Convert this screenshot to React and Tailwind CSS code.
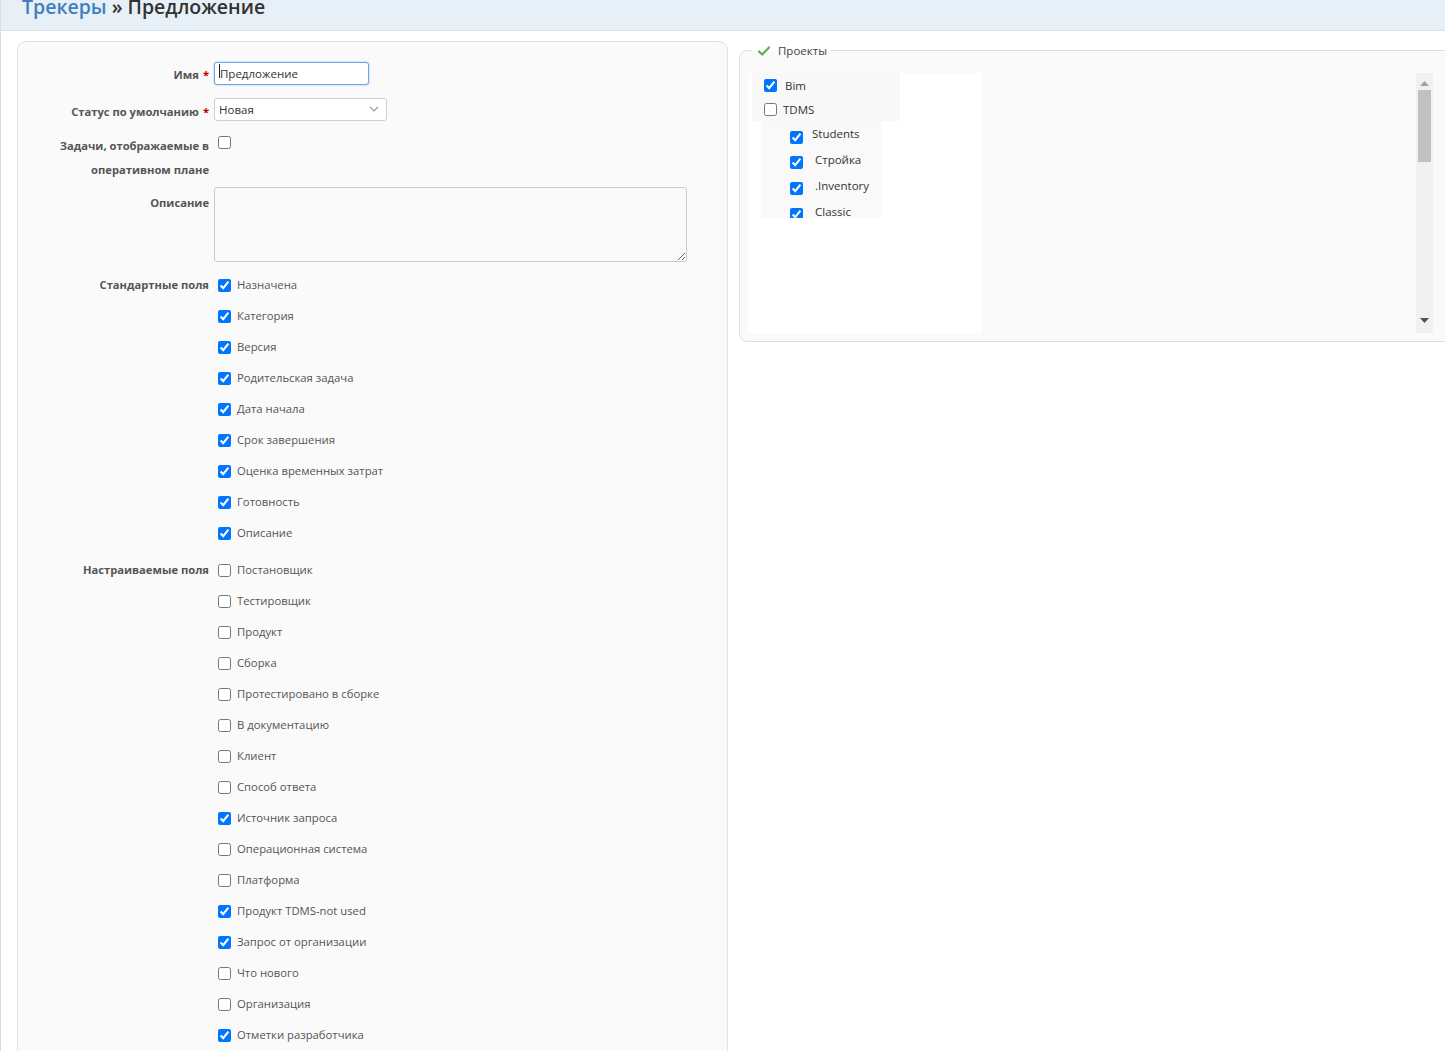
import { useState } from 'react';

const standardFields = [
  { name: 'Назначена', checked: true },
  { name: 'Категория', checked: true },
  { name: 'Версия', checked: true },
  { name: 'Родительская задача', checked: true },
  { name: 'Дата начала', checked: true },
  { name: 'Срок завершения', checked: true },
  { name: 'Оценка временных затрат', checked: true },
  { name: 'Готовность', checked: true },
  { name: 'Описание', checked: true },
];

const customFields = [
  { name: 'Постановщик', checked: false },
  { name: 'Тестировщик', checked: false },
  { name: 'Продукт', checked: false },
  { name: 'Сборка', checked: false },
  { name: 'Протестировано в сборке', checked: false },
  { name: 'В документацию', checked: false },
  { name: 'Клиент', checked: false },
  { name: 'Способ ответа', checked: false },
  { name: 'Источник запроса', checked: true },
  { name: 'Операционная система', checked: false },
  { name: 'Платформа', checked: false },
  { name: 'Продукт TDMS-not used', checked: true },
  { name: 'Запрос от организации', checked: true },
  { name: 'Что нового', checked: false },
  { name: 'Организация', checked: false },
  { name: 'Отметки разработчика', checked: true },
  { name: 'Версия продукта', checked: false },
];

const subProjects = [
  { name: 'Students', pad: 'pl-[9px]' },
  { name: 'Стройка', pad: 'pl-[12px]' },
  { name: '.Inventory', pad: 'pl-[12px]' },
  { name: 'Classic', pad: 'pl-[12px]' },
];

// one checkbox row of the fields list, 31px high
const FieldRow = ({ field }) => (
  <label className="flex items-center h-[31px]">
    <input type="checkbox" defaultChecked={field.checked} className="ml-[4px] w-[13px] h-[13px]" />
    <span className="ml-[6px] text-[11.3px] text-[#555]">{field.name}</span>
  </label>
);

const FieldGroup = ({ title, fields, className }) => (
  <div className={`flex items-start ${className || ''}`}>
    <div className="w-[196px] pr-[5px] h-[31px] flex items-center justify-end font-bold text-[11.2px] text-[#555]">
      {title}
    </div>
    <div className="flex flex-col">
      {fields.map((f) => (
        <FieldRow key={f.name} field={f} />
      ))}
    </div>
  </div>
);

const Required = () => <span className="text-[#bb0000] ml-[4px]">*</span>;

const labelCls = 'w-[196px] pr-[5px] text-right font-bold text-[11.2px] leading-[24px] text-[#555]';

const TrackerForm = () => {
  const [name, setName] = useState('Предложение');

  return (
    <div className="w-[711px] shrink-0 border border-[#e2e2e2] rounded-[9px] bg-[#fafafa] pt-[18px] pb-[40px]">
      {/* Name */}
      <div className="flex items-start">
        <div className={`${labelCls} pt-[3px]`}>
          Имя<Required />
        </div>
        <div className="relative">
          <input
            value={name}
            onChange={(e) => setName(e.target.value)}
            className="w-[155px] h-[23px] pl-[5px] text-[11.5px] text-[#333] bg-white border border-[#6aa6e8] rounded-[3px] shadow-[0_0_2px_rgba(80,150,230,0.6)] outline-none"
          />
          <span className="absolute left-[5px] top-[4px] w-px h-[14px] bg-[#222]" />
        </div>
      </div>

      {/* Default status */}
      <div className="flex items-start mt-[11px]">
        <div className={`${labelCls} pt-[2px]`}>
          Статус по умолчанию<Required />
        </div>
        <div className="relative w-[173px] h-[23px] border border-[#cfcfcf] rounded-[3px] bg-white flex items-center pl-[4px] text-[11.5px] text-[#333]">
          Новая
          <svg className="absolute right-[7px] top-[7px]" width="10" height="7" viewBox="0 0 10 7" fill="none">
            <path d="M1 1l4 4 4-4" stroke="#9a9a9a" strokeWidth="1.2" />
          </svg>
        </div>
      </div>

      {/* Roadmap */}
      <div className="flex items-start mt-[10px]">
        <div className={labelCls}>
          Задачи, отображаемые в<br />оперативном плане
        </div>
        <input type="checkbox" className="ml-[4px] mt-[2px] w-[13px] h-[13px]" />
      </div>

      {/* Description */}
      <div className="flex items-start mt-[5px]">
        <div className={`${labelCls} pt-[4px]`}>Описание</div>
        <textarea className="w-[473px] h-[75px] bg-[#f9f9f9] border border-[#cccccc] rounded-[3px] outline-none" />
      </div>

      <FieldGroup title="Стандартные поля" fields={standardFields} className="mt-[8px]" />
      <FieldGroup title="Настраиваемые поля" fields={customFields} className="mt-[6px]" />
    </div>
  );
};

const CheckIcon = () => (
  <svg width="12" height="10" viewBox="0 0 12 10">
    <path d="M1 5.5l3.2 3L11 1.5" fill="none" stroke="#5cae4e" strokeWidth="2.2" strokeLinecap="round" strokeLinejoin="round" />
  </svg>
);

const FakeScrollbar = () => (
  <div className="w-[17px] shrink-0 bg-[#f1f1f1] flex flex-col items-center">
    <svg className="mt-[8px]" width="9" height="5" viewBox="0 0 9 5">
      <path d="M0 5L4.5 0 9 5z" fill="#a3a3a3" />
    </svg>
    <div className="mt-[4px] w-[13px] h-[72px] bg-[#c1c1c1]" />
    <div className="flex-1" />
    <svg className="mb-[10px]" width="9" height="5" viewBox="0 0 9 5">
      <path d="M0 0h9L4.5 5z" fill="#505050" />
    </svg>
  </div>
);

const ProjectsBox = () => (
  <fieldset className="w-[714px] shrink-0 mt-[1px] border border-[#dedede] rounded-[8px] bg-[#fafafa] pl-[8px] pr-[19px] pb-[8px] pt-[14px]">
    <legend className="ml-[4px] px-[4px] flex items-center text-[11.5px] text-[#444]">
      <span className="ml-[2px]"><CheckIcon /></span>
      <span className="ml-[8px]">Проекты</span>
    </legend>
    <div className="flex h-[260px]">
      <div className="flex-1">
        <div className="w-[234px] h-[260px] bg-white">
          <div className="w-[148px] ml-[4px] bg-[#f8f8f8]">
            <label className="flex items-center h-[24px] pl-[12px]">
              <input type="checkbox" defaultChecked className="w-[13px] h-[13px]" />
              <span className="ml-[8px] text-[11.5px] text-[#333]">Bim</span>
            </label>
            <label className="flex items-center h-[24px] pl-[12px]">
              <input type="checkbox" className="w-[13px] h-[13px]" />
              <span className="ml-[6px] text-[11.5px] text-[#333]">TDMS</span>
            </label>
          </div>
          <div className="ml-[14px] w-[120px] h-[97px] overflow-hidden bg-[#f9f9f9] pt-[1px]">
            {subProjects.map((p) => (
              <label key={p.name} className="flex items-center h-[25.7px] pl-[28px]">
                <input type="checkbox" defaultChecked className="w-[13px] h-[13px] mt-[4px]" />
                <span className={`${p.pad} text-[11.5px] text-[#333] -mt-[2px]`}>{p.name}</span>
              </label>
            ))}
          </div>
        </div>
      </div>
      <FakeScrollbar />
    </div>
  </fieldset>
);

export default function App() {
  return (
    <div className="w-[1445px] h-[1051px] overflow-hidden bg-white border-l border-[#dcdcdc] font-['Open_Sans',sans-serif]">
      <div className="h-[31px] bg-[#e6f0f6] border-b border-[#d5e3ea] overflow-hidden">
        <h2 className="pl-[21px] -mt-[5px] text-[19.5px] leading-[24px] font-semibold text-[#333]">
          <span className="text-[#3f7fc1]">Трекеры</span> » Предложение
        </h2>
      </div>
      <div className="flex items-start gap-[11px] pl-[16px] pt-[10px]">
        <TrackerForm />
        <ProjectsBox />
      </div>
    </div>
  );
}
